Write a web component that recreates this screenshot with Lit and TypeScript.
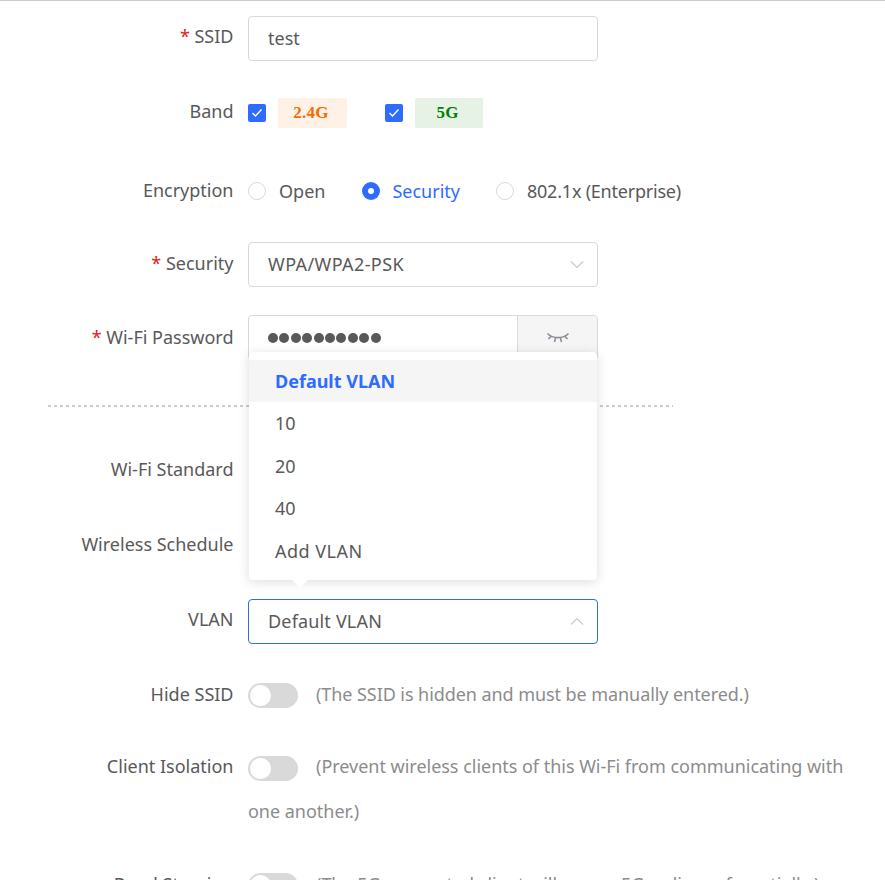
import { LitElement, html, css } from "lit";
import { customElement } from "lit/decorators.js";

const chevron = (up: boolean) => html`<svg class="chev" width="14" height="8" viewBox="0 0 14 8" fill="none"><path d=${up ? "M1 6.500 7 .5l6 6" : "M1 .5l6 6 6-6"} stroke="#c8c9cc" stroke-width="1.1"/></svg>`;
const check = html`<svg width="12" height="10" viewBox="0 0 12 10" fill="none"><path d="M1.500 5 4.500 8 10.500 1.500" stroke="#fff" stroke-width="1.400"/></svg>`;

@customElement("app-root")
export class AppRoot extends LitElement {
  static styles = css`
    :host { display: block; height: 880px; overflow: hidden; background: #fff; border-top: 1px solid #ccc; box-sizing: border-box; font-family: "Noto Sans", sans-serif; font-size: 18px; color: #595959; position: relative; }
    .form { padding: 15px 0 0 0; display: flex; flex-direction: column; position: relative; }
    .row { display: flex; align-items: flex-start; min-height: 45px; }
    .label { width: 233.500px; padding-right: 14.500px; flex: none; text-align: right; line-height: 41px; height: 45px; white-space: nowrap; }
    .l43 { line-height: 43px; }
    .l45 { line-height: 45px; }
    .req { color: #e02020; }
    .ctrl { flex: 1; min-width: 0; }
    .mb28 { margin-bottom: 28px; }
    .mb29 { margin-bottom: 29px; }
    .mb30 { margin-bottom: 30px; }
    .mb32 { margin-bottom: 32px; }
    .mb33 { margin-bottom: 33px; }
    .input { width: 350px; height: 45px; box-sizing: border-box; border: 1px solid #d9d9d9; border-radius: 4px; padding: 0 19px; display: flex; align-items: center; justify-content: space-between; line-height: 43px; }
    .input.focus { border-color: #2f6bea; }
    .chev { margin-right: -6px; }
    .wide { letter-spacing: .4px; }
    .wide2 { letter-spacing: .17px; }
    .pw { display: flex; width: 350px; height: 45px; box-sizing: border-box; border: 1px solid #d9d9d9; border-radius: 4px; overflow: hidden; }
    .pw .val { flex: 1; padding-left: 19px; display: flex; align-items: center; gap: 1.4px; }
    .dot { width: 10px; height: 10px; border-radius: 50%; background: #595959; }
    .pw .addon { width: 80px; box-sizing: border-box; background: #f5f5f5; border-left: 1px solid #d9d9d9; display: flex; align-items: flex-start; justify-content: center; padding-top: 15px; }
    .band { height: 45px; display: flex; align-items: center; }
    .cb { width: 18px; height: 18px; border-radius: 2px; background: #2f6bff; display: flex; align-items: center; justify-content: center; flex: none; }
    .tag { height: 30px; margin-left: 12px; border-radius: 2px; font: bold 17px "Liberation Serif", serif; display: flex; align-items: center; justify-content: center; padding-right: 3px; box-sizing: border-box; letter-spacing: .2px; }
    .tag.g2 { width: 69px; background: #fff1e6; color: #f56c00; margin-right: 38px; }
    .tag.g5 { width: 68px; background: #e6f2e6; color: #008000; }
    .radios { height: 45px; display: flex; align-items: center; }
    .radio { display: flex; align-items: center; gap: 13px; }
    .r1 { margin-right: 37px; }
    .r2 { margin-right: 36px; gap: 12px; }
    .r3 { letter-spacing: -.22px; }
    .rc { width: 18px; height: 18px; border-radius: 50%; box-sizing: border-box; border: 1px solid #d9d9d9; flex: none; }
    .rc.on { background: #2f6bff; border: 0; display: flex; align-items: center; justify-content: center; }
    .rc.on::after { content: ""; width: 6px; height: 6px; border-radius: 50%; background: #fff; }
    .sec { color: #2f6bff; }
    .divider { width: 625px; margin: 45px 0 40px 48px; height: 2px; background: repeating-linear-gradient(90deg, #ccc 0 3px, transparent 3px 6px); }
    .sw-line { line-height: 45px; color: #8c8c8c; padding-right: 20px; letter-spacing: -.02px; }
    .sw-line.tight { letter-spacing: -.07px; }
    .sw-line.up { margin-top: -1px; }
    .sw-line.up .sw { margin-top: 12px; }
    .sw { display: inline-block; vertical-align: top; margin-top: 11px; width: 50px; height: 25px; border-radius: 13px; background: #d9d9d9; position: relative; margin-right: 18px; }
    .sw::after { content: ""; position: absolute; left: 2px; top: 2px; width: 21px; height: 21px; border-radius: 50%; background: #fff; }
    .menu { position: absolute; left: 249px; top: 351px; width: 348px; height: 228px; box-sizing: border-box; padding-top: 7.750px; background: #fff; border-radius: 4px; box-shadow: 0 2px 12px rgba(0,0,0,.14); }
    .menu::after { content: ""; position: absolute; left: 43px; bottom: -8px; border: 8px solid transparent; border-bottom: 0; border-top-color: #fff; }
    .item { height: 42.5px; line-height: 42.5px; padding-left: 26px; }
    .item.active { background: #f5f5f5; color: #2f6bff; font-weight: 700; }
    .item.wide3 { letter-spacing: .5px; }
  `;

  render() {
    return html`
      <div class="form">
        <div class="row mb29"><div class="label"><span class="req">*</span> SSID</div><div class="ctrl"><div class="input">test</div></div></div>
        <div class="row mb33"><div class="label l43">Band</div><div class="ctrl band">
          <span class="cb">${check}</span><span class="tag g2">2.4G</span>
          <span class="cb">${check}</span><span class="tag g5">5G</span>
        </div></div>
        <div class="row mb29"><div class="label l45">Encryption</div><div class="ctrl radios">
          <span class="radio r1"><span class="rc"></span>Open</span>
          <span class="radio r2 sec"><span class="rc on"></span>Security</span>
          <span class="radio r3"><span class="rc"></span>802.1x (Enterprise)</span>
        </div></div>
        <div class="row mb28"><div class="label l43"><span class="req">*</span> Security</div><div class="ctrl"><div class="input"><span class="wide">WPA/WPA2-PSK</span>${chevron(false)}</div></div></div>
        <div class="row"><div class="label l45"><span class="req">*</span> Wi-Fi Password</div><div class="ctrl"><div class="pw">
          <div class="val">${Array.from({ length: 10 }, () => html`<span class="dot"></span>`)}</div>
          <div class="addon"><svg width="24" height="14" viewBox="0 0 24 14" fill="none" stroke="#8a8f99" stroke-width="1.600"><path d="M1.500 2.500C7 8 17 8 22.500 2.500M5.500 5 2.500 8M9.500 7 8.500 11M14.500 7l1 4M18.500 5l3 3"/></svg></div>
        </div></div></div>
        <div class="divider"></div>
        <div class="row mb30"><div class="label l45">Wi-Fi Standard</div></div>
        <div class="row mb32"><div class="label l45">Wireless Schedule</div></div>
        <div class="row mb28"><div class="label">VLAN</div><div class="ctrl"><div class="input focus"><span class="wide2">Default VLAN</span>${chevron(true)}</div></div></div>
        <div class="row mb28"><div class="label l45">Hide SSID</div><div class="ctrl sw-line tight"><span class="sw"></span>(The SSID is hidden and must be manually entered.)</div></div>
        <div class="row mb28"><div class="label l43">Client Isolation</div><div class="ctrl sw-line up"><span class="sw"></span>(Prevent wireless clients of this Wi-Fi from communicating with one another.)</div></div>
        <div class="row"><div class="label l45">Band Steering</div><div class="ctrl sw-line"><span class="sw"></span>(The 5G-supported client will access 5G radio preferentially.)</div></div>
        <div class="menu">
          <div class="item active">Default VLAN</div>
          <div class="item">10</div>
          <div class="item">20</div>
          <div class="item">40</div>
          <div class="item wide3">Add VLAN</div>
        </div>
      </div>
    `;
  }
}
